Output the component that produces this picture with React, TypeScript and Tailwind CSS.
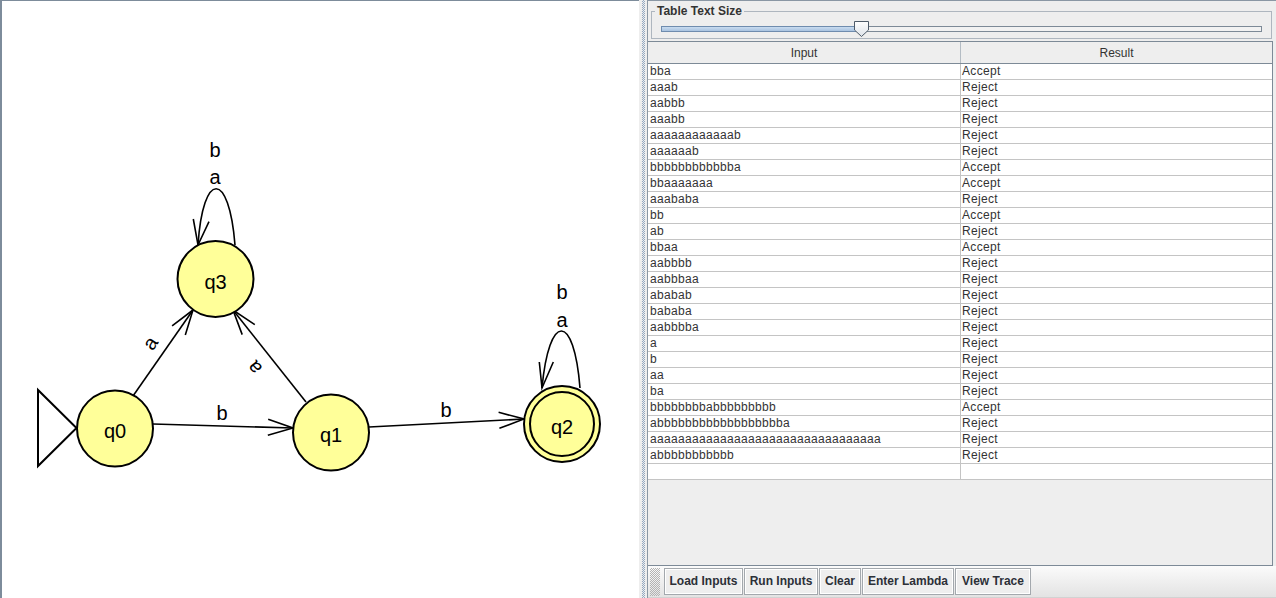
import React from 'react';

// input strings and the simulator's verdict for each
const rows: [string, string][] = [
  ['bba', 'Accept'],
  ['aaab', 'Reject'],
  ['aabbb', 'Reject'],
  ['aaabb', 'Reject'],
  ['a'.repeat(12) + 'b', 'Reject'],
  ['aaaaaab', 'Reject'],
  ['b'.repeat(12) + 'a', 'Accept'],
  ['bbaaaaaaa', 'Accept'],
  ['aaababa', 'Reject'],
  ['bb', 'Accept'],
  ['ab', 'Reject'],
  ['bbaa', 'Accept'],
  ['aabbbb', 'Reject'],
  ['aabbbaa', 'Reject'],
  ['ababab', 'Reject'],
  ['bababa', 'Reject'],
  ['aabbbba', 'Reject'],
  ['a', 'Reject'],
  ['b', 'Reject'],
  ['aa', 'Reject'],
  ['ba', 'Reject'],
  ['bbbbbbbbabbbbbbbbb', 'Accept'],
  ['a' + 'b'.repeat(18) + 'a', 'Reject'],
  ['a'.repeat(33), 'Reject'],
  ['a' + 'b'.repeat(11), 'Reject'],
  ['', ''],
];

const buttons = [
  { label: 'Load Inputs', className: 'w-[79px]' },
  { label: 'Run Inputs', className: 'w-[74px]' },
  { label: 'Clear', className: 'w-[42px]' },
  { label: 'Enter Lambda', className: 'w-[92px]' },
  { label: 'View Trace', className: 'w-[76px]' },
];

const STATE_FILL = '#ffff99';

const State = ({ x, y, name, final }: { x: number; y: number; name: string; final?: boolean }) => (
  <g>
    <circle cx={x} cy={y} r={38} fill={STATE_FILL} stroke="#000" strokeWidth={2} />
    {final && <circle cx={x} cy={y} r={32} fill="none" stroke="#000" strokeWidth={2} />}
    <text x={x} y={y + 9.5} textAnchor="middle" fontSize={20}>
      {name}
    </text>
  </g>
);

const Edge = ({ d, head }: { d: string; head: [number, number, number, number, number, number] }) => {
  const [tx, ty, ax, ay, bx, by] = head;
  return (
    <g fill="none" stroke="#000" strokeWidth={1.6}>
      <path d={d} />
      <path d={`M ${ax} ${ay} L ${tx} ${ty} L ${bx} ${by}`} />
    </g>
  );
};

const Diagram = () => (
  <svg width={637} height={597} viewBox="2 1 637 597" className="block font-['Liberation_Sans',Arial,sans-serif]">
    {/* start marker */}
    <polygon points="38,390 38,466 76.5,428" fill="#fff" stroke="#000" strokeWidth={2} />

    <Edge d="M 153 424 L 293 428" head={[293, 428, 267.8, 435.3, 268.2, 419.3]} />
    <Edge d="M 369 427 L 524 419" head={[524, 419, 499.4, 428.3, 498.6, 412.3]} />
    <Edge d="M 133 396 L 193 310" head={[193, 310, 185.3, 335.1, 172.1, 325.9]} />
    <Edge d="M 306 402 L 233 310" head={[233, 310, 254.8, 324.6, 242.2, 334.6]} />
    <Edge d="M 235 245 C 229 170, 203 170, 198 245" head={[198, 245, 193.3, 219, 209, 221.7]} />
    <Edge d="M 580 388 C 574 312, 549 312, 542 388" head={[542, 388, 539.3, 362, 553.3, 362]} />

    <g fontSize={20} textAnchor="middle">
      <text x={222} y={420}>b</text>
      <text x={446} y={417}>b</text>
      <text x={215} y={157}>b</text>
      <text x={215} y={184}>a</text>
      <text x={562} y={299}>b</text>
      <text x={562} y={327}>a</text>
      <text x={0} y={0} dominantBaseline="central" transform="translate(150 343) rotate(-56.5)">a</text>
      <text x={0} y={0} dominantBaseline="central" transform="translate(254 368) rotate(-128.4)">a</text>
    </g>

    <State x={115} y={428.5} name="q0" />
    <State x={331} y={432.5} name="q1" />
    <State x={562} y={424} name="q2" final />
    <State x={215.5} y={279} name="q3" />
  </svg>
);

const Slider = () => (
  <div className="h-[20px] px-[9px] pt-[8px]">
    <div className="relative flex h-[6px]">
      <div className="w-[196px] border border-[#6f8cae] bg-[linear-gradient(#c9dcf0,#a9c3e0)]" />
      <div className="flex-1 border border-[#7d8a97] bg-[#f2f2f2]" />
      <svg width={17} height={16} viewBox="0 0 17 16" className="absolute left-[192px] top-[-5px]">
        <defs>
          <linearGradient id="thumb" x1="0" y1="0" x2="0" y2="1">
            <stop offset="0" stopColor="#ffffff" />
            <stop offset="1" stopColor="#dde2e8" />
          </linearGradient>
        </defs>
        <path d="M 1.5 0.5 H 15.5 V 9 L 8.5 15.5 L 1.5 9 Z" fill="url(#thumb)" stroke="#4e5b69" />
      </svg>
    </div>
  </div>
);

const App = () => {
  return (
    <div className="flex w-[1276px] h-[598px] overflow-hidden bg-[#eeeeee] font-['Liberation_Sans',Arial,sans-serif] text-[#333333]">
      <div className="w-[639px] h-full bg-white border-l-2 border-t border-[#7d8c9b]">
        <Diagram />
      </div>

      <div className="w-[8px] h-full pl-[3px]">
        <div className="w-[3px] h-full bg-[repeating-conic-gradient(#93a8c1_0_25%,transparent_0_50%)] bg-[length:2px_2px]" />
      </div>

      <div className="flex-1 flex flex-col h-full border-l border-t border-[#8a97a4]">
        <fieldset className="mt-[3px] ml-[3px] mr-[4px] border border-[#aeb6bf]">
          <legend className="ml-[3px] px-[2px] text-[12px] leading-[14px] font-bold text-[#333]">Table Text Size</legend>
          <Slider />
        </fieldset>

        <div className="mt-[2px] mr-[3px] flex-1 flex flex-col border-t border-r border-b border-[#7d8a97]">
          <div className="flex h-[22px] border-b border-[#7d8a97] bg-[#eeeeee] text-[12px]">
            <div className="w-[313px] flex items-center justify-center border-r border-[#b4bcc4]">Input</div>
            <div className="flex-1 flex items-center justify-center">Result</div>
          </div>
          <div className="bg-white text-[12px] tracking-[0.33px]">
            {rows.map(([input, result], i) => (
              <div key={i} className="flex h-[16px] border-b border-[#c4c4c4]">
                <div className="w-[313px] pl-[2px] leading-[14px] border-r border-[#c4c4c4] whitespace-nowrap">{input}</div>
                <div className="flex-1 pl-[1px] leading-[14px]">{result}</div>
              </div>
            ))}
          </div>
        </div>

        <div className="h-[32px] flex items-start pt-[2px] pl-[2px] bg-[linear-gradient(#fbfbfb,#e3e3e3)] border-b border-[#d2d2d2]">
          <div className="w-[10px] h-[28px] bg-[repeating-conic-gradient(#b3b3b3_0_25%,transparent_0_50%)] bg-[length:2px_2px]" />
          <div className="ml-[4px] flex gap-px">
            {buttons.map((b) => (
              <button
                key={b.label}
                className={`${b.className} h-[27px] flex items-center justify-center pb-px border border-[#a3a8ad] bg-[#eeeeee] shadow-[inset_0_0_0_1px_#ffffff] text-[12px] font-bold text-[#2c3038]`}
              >
                {b.label}
              </button>
            ))}
          </div>
        </div>
      </div>
    </div>
  );
};

export default App;
